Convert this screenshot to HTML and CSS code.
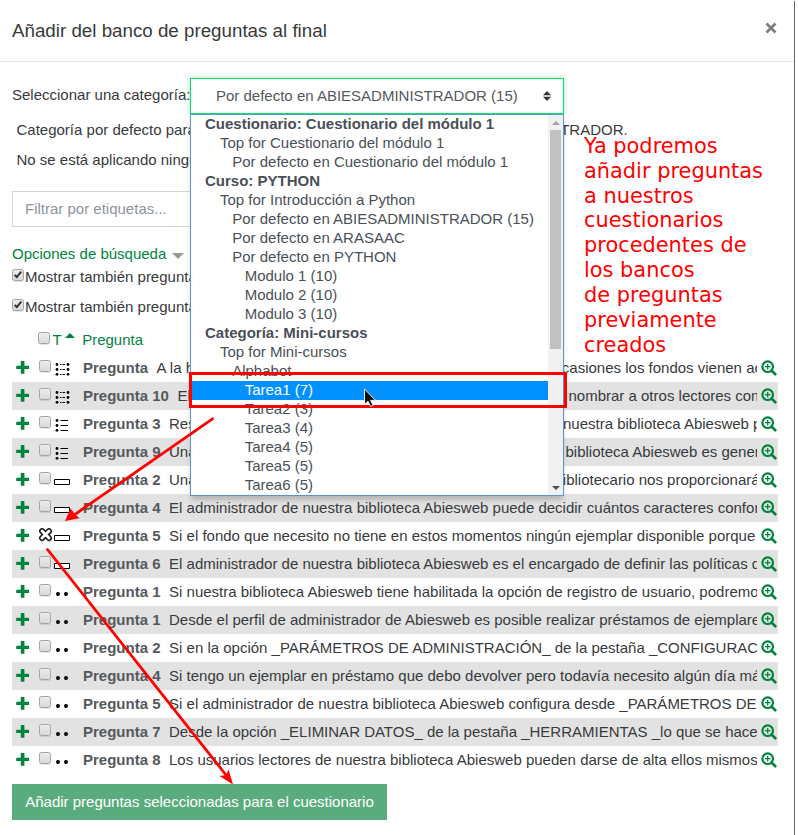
FILE: index.html
```html
<!DOCTYPE html>
<html lang="es">
<head>
<meta charset="utf-8">
<title>Añadir del banco de preguntas al final</title>
<link rel="stylesheet" href="styles.css">
</head>
<body>
<svg class="defs" width="0" height="0">
  <symbol id="plus" viewBox="0 0 13 13"><path d="M4.800 0h3.600v4.700H13v3.400H8.400v4.700H4.800V8.100H0.200V4.700h4.600z" fill="#00843d"/></symbol>
  <symbol id="zoom" viewBox="0 0 16 16"><circle cx="6.700" cy="6.700" r="5.300" fill="none" stroke="#00843d" stroke-width="2.200"/><path d="M10.600 10.600l3.700 3.700" stroke="#00843d" stroke-width="2.700" stroke-linecap="round"/><path d="M6.700 3.900v5.600M3.900 6.700h5.600" stroke="#00843d" stroke-width="1.300"/></symbol>
  <symbol id="match" viewBox="0 0 16 16"><circle cx="3" cy="3.500" r="1.400"/><circle cx="3" cy="8.500" r="1.400"/><circle cx="3" cy="13.300" r="1.400"/><circle cx="14" cy="3.500" r="1.400"/><circle cx="14" cy="8.500" r="1.400"/><circle cx="14" cy="13.300" r="1.400"/><path d="M6 3h1.500v1H6zM8.500 3h2.500v1H8.500zM6 8h1.500v1H6zM8.500 8h2.500v1H8.500zM6 13h1.500v1H6zM8.500 13h2.500v1H8.500z"/></symbol>
  <symbol id="multi" viewBox="0 0 16 16"><circle cx="3" cy="3.500" r="1.400"/><circle cx="3" cy="8.500" r="1.400"/><circle cx="3" cy="13.300" r="1.400"/><path d="M6.500 3h7.500v1H6.500zM6.500 8h7.500v1H6.500zM6.500 13h7.500v1H6.500z"/></symbol>
  <symbol id="short" viewBox="0 0 16 16"><path d="M.5 6.500h15v5H.5z" fill="#fff" stroke="#000"/></symbol>
  <symbol id="tf" viewBox="0 0 16 16"><circle cx="4" cy="9" r="2"/><circle cx="12" cy="9" r="2"/></symbol>
</svg>
<div class="modal">
  <header class="head">
    <h1>Añadir del banco de preguntas al final</h1>
    <svg class="close" width="12" height="12" viewBox="0 0 12 12"><path d="M1.500 1.500l9 9M10.500 1.500l-9 9" stroke="#7f7f7f" stroke-width="2.800"/></svg>
  </header>
  <main>
    <div class="category">
      <label>Seleccionar una categoría:</label>
      <div class="select">
        <span>Por defecto en ABIESADMINISTRADOR (15)</span>
        <svg width="8" height="10" viewBox="0 0 8 10"><path d="M4 0l4 4.300H0zM4 10l4-4.300H0z" fill="#333"/></svg>
        <div class="popup">
          <ul>
            <li class="group">Cuestionario: Cuestionario del módulo 1</li>
            <li class="l1">Top for Cuestionario del módulo 1</li>
            <li class="l2">Por defecto en Cuestionario del módulo 1</li>
            <li class="group">Curso: PYTHON</li>
            <li class="l1">Top for Introducción a Python</li>
            <li class="l2">Por defecto en ABIESADMINISTRADOR (15)</li>
            <li class="l2">Por defecto en ARASAAC</li>
            <li class="l2">Por defecto en PYTHON</li>
            <li class="l3">Modulo 1 (10)</li>
            <li class="l3">Modulo 2 (10)</li>
            <li class="l3">Modulo 3 (10)</li>
            <li class="group">Categoría: Mini-cursos</li>
            <li class="l1">Top for Mini-cursos</li>
            <li class="l2">Alphabot</li>
            <li class="l3 active">Tarea1 (7)</li>
            <li class="l3">Tarea2 (3)</li>
            <li class="l3">Tarea3 (4)</li>
            <li class="l3">Tarea4 (5)</li>
            <li class="l3">Tarea5 (5)</li>
            <li class="l3">Tarea6 (5)</li>
          </ul>
          <div class="scroll">
            <svg width="8" height="4" viewBox="0 0 8 4"><path d="M4 0l4 4H0z" fill="#a3a3a3"/></svg>
            <i></i>
            <svg width="8" height="4" viewBox="0 0 8 4"><path d="M4 4l4-4H0z" fill="#505050"/></svg>
          </div>
        </div>
      </div>
    </div>
    <p class="info">Categoría por defecto para preguntas compartidas en el contexto ABIESADMINISTRADOR.</p>
    <p class="info">No se está aplicando ningún filtro</p>
    <div class="tags">Filtrar por etiquetas...</div>
    <div class="options">Opciones de búsqueda <svg width="12" height="6" viewBox="0 0 12 6"><path d="M0 0h12L6 6z" fill="#999"/></svg></div>
    <label class="opt"><i class="cb on"></i><span>Mostrar también preguntas</span></label>
    <label class="opt second"><i class="cb on"></i><span>Mostrar también preguntas</span></label>
    <div class="thead"><i class="cb"></i><span class="t">T</span><svg width="10" height="5" viewBox="0 0 10 5"><path d="M5 0l5 5H0z" fill="#00843d"/></svg><span class="q">Pregunta</span></div>
    <div class="rows">
      <div class="row"><svg class="plus"><use href="#plus"/></svg><i class="cb"></i><svg class="type"><use href="#match"/></svg><div class="text"><span class="lead w1"><b>Pregunta</b>A la hora</span>ocasiones los fondos vienen acompañados</div><svg class="zoom"><use href="#zoom"/></svg></div>
      <div class="row"><svg class="plus"><use href="#plus"/></svg><i class="cb"></i><svg class="type"><use href="#match"/></svg><div class="text"><span class="lead w2"><b>Pregunta 10</b>El</span>nombrar a otros lectores como</div><svg class="zoom"><use href="#zoom"/></svg></div>
      <div class="row"><svg class="plus"><use href="#plus"/></svg><i class="cb"></i><svg class="type"><use href="#multi"/></svg><div class="text"><span class="lead w3"><b>Pregunta 3</b>Respecto</span>nuestra biblioteca Abiesweb puede</div><svg class="zoom"><use href="#zoom"/></svg></div>
      <div class="row"><svg class="plus"><use href="#plus"/></svg><i class="cb"></i><svg class="type"><use href="#multi"/></svg><div class="text"><span class="lead w4"><b>Pregunta 9</b>Una</span>biblioteca Abiesweb es generar</div><svg class="zoom"><use href="#zoom"/></svg></div>
      <div class="row"><svg class="plus"><use href="#plus"/></svg><i class="cb"></i><svg class="type"><use href="#short"/></svg><div class="text"><span class="lead w5"><b>Pregunta 2</b>Una</span>bibliotecario nos proporcionará</div><svg class="zoom"><use href="#zoom"/></svg></div>
      <div class="row"><svg class="plus"><use href="#plus"/></svg><i class="cb"></i><svg class="type"><use href="#short"/></svg><div class="text"><b>Pregunta 4</b>El administrador de nuestra biblioteca Abiesweb puede decidir cuántos caracteres conforman</div><svg class="zoom"><use href="#zoom"/></svg></div>
      <div class="row"><svg class="plus"><use href="#plus"/></svg><i class="cb hidden"></i><svg class="type"><use href="#short"/></svg><div class="text"><b>Pregunta 5</b>Si el fondo que necesito no tiene en estos momentos ningún ejemplar disponible porque</div><svg class="zoom"><use href="#zoom"/></svg></div>
      <div class="row"><svg class="plus"><use href="#plus"/></svg><i class="cb"></i><svg class="type"><use href="#short"/></svg><div class="text"><b>Pregunta 6</b>El administrador de nuestra biblioteca Abiesweb es el encargado de definir las políticas de</div><svg class="zoom"><use href="#zoom"/></svg></div>
      <div class="row"><svg class="plus"><use href="#plus"/></svg><i class="cb"></i><svg class="type"><use href="#tf"/></svg><div class="text"><b>Pregunta 1</b>Si nuestra biblioteca Abiesweb tiene habilitada la opción de registro de usuario, podremos</div><svg class="zoom"><use href="#zoom"/></svg></div>
      <div class="row"><svg class="plus"><use href="#plus"/></svg><i class="cb"></i><svg class="type"><use href="#tf"/></svg><div class="text"><b>Pregunta 1</b>Desde el perfil de administrador de Abiesweb es posible realizar préstamos de ejemplares</div><svg class="zoom"><use href="#zoom"/></svg></div>
      <div class="row"><svg class="plus"><use href="#plus"/></svg><i class="cb"></i><svg class="type"><use href="#tf"/></svg><div class="text"><b>Pregunta 2</b>Si en la opción _PARÁMETROS DE ADMINISTRACIÓN_ de la pestaña _CONFIGURACIÓN_</div><svg class="zoom"><use href="#zoom"/></svg></div>
      <div class="row"><svg class="plus"><use href="#plus"/></svg><i class="cb"></i><svg class="type"><use href="#tf"/></svg><div class="text"><b>Pregunta 4</b>Si tengo un ejemplar en préstamo que debo devolver pero todavía necesito algún día más</div><svg class="zoom"><use href="#zoom"/></svg></div>
      <div class="row"><svg class="plus"><use href="#plus"/></svg><i class="cb"></i><svg class="type"><use href="#tf"/></svg><div class="text"><b>Pregunta 5</b>Si el administrador de nuestra biblioteca Abiesweb configura desde _PARÁMETROS DE</div><svg class="zoom"><use href="#zoom"/></svg></div>
      <div class="row"><svg class="plus"><use href="#plus"/></svg><i class="cb"></i><svg class="type"><use href="#tf"/></svg><div class="text"><b>Pregunta 7</b>Desde la opción _ELIMINAR DATOS_ de la pestaña _HERRAMIENTAS _lo que se hace</div><svg class="zoom"><use href="#zoom"/></svg></div>
      <div class="row"><svg class="plus"><use href="#plus"/></svg><i class="cb"></i><svg class="type"><use href="#tf"/></svg><div class="text"><b>Pregunta 8</b>Los usuarios lectores de nuestra biblioteca Abiesweb pueden darse de alta ellos mismos</div><svg class="zoom"><use href="#zoom"/></svg></div>
    </div>
    <button class="add">Añadir preguntas seleccionadas para el cuestionario</button>
  </main>
</div>
<div class="note">Ya podremos<br>añadir preguntas<br>a nuestros<br>cuestionarios<br>procedentes de<br>los bancos<br>de preguntas<br>previamente<br>creados</div>
<svg class="marks" width="798" height="835" viewBox="0 0 798 835">
  <g stroke="#f00" stroke-width="3" fill="none">
    <rect x="190.500" y="373.500" width="375" height="33"/>
    <path stroke-width="2.800" stroke-linecap="round" d="M212.500 418.800L75 514.300M47.500 549.500L226 775"/>
  </g>
  <path fill="#f00" d="M65 521l5.500-12.500 4.500 5.800 4.500 4zM233 784.500l-13.500-8.500 6.500-1 2.500-5.500z"/>
  <g fill="none" stroke-linecap="round">
    <path d="M42.500 532l7 7M49.500 532l-7 7" stroke="#888" stroke-width="5.600" opacity=".5"/>
    <path d="M42 531l7 7M49 531l-7 7" stroke="#111" stroke-width="5.800"/>
    <path d="M42 531l7 7M49 531l-7 7" stroke="#fff" stroke-width="3"/>
  </g>
  <path d="M364.500 389v15.500l3.500-3.200 2.600 5.200 2.600-1.200-2.600-4.900h5z" fill="#111" stroke="#fff" stroke-width=".9"/>
</svg>
</body>
</html>
```
FILE: styles.css
```css
* { box-sizing: border-box; }
body {
  margin: 0;
  height: 835px;
  overflow: hidden;
  position: relative;
  background: #fff;
  color: #373a3c;
  font: 15px/22px "Liberation Sans", Arial, sans-serif;
}
.defs { position: absolute; }
.modal { width: 795px; height: 834px; margin-top: 1px; border-right: 1px solid #65686b; }
.head {
  height: 61px;
  padding: 0 17px 0 12px;
  display: flex;
  align-items: center;
  justify-content: space-between;
  border-bottom: 1px solid #e5e5e5;
}
h1 { margin: 0; font-size: 18.75px; font-weight: 400; }
.close { margin-bottom: 6px; }
main { padding: 16px 16px 0 12px; }
.category { display: flex; height: 36px; align-items: center; white-space: nowrap; }
.category label { width: 178px; padding-bottom: 2px; }
.select {
  position: relative;
  width: 374px;
  height: 36px;
  padding: 0 12px 0 25px;
  border: 1px solid #00e56d;
  box-shadow: 0 0 5px rgba(0, 132, 61, .3);
  background: #fff;
  color: #55595c;
  display: flex;
  align-items: center;
  justify-content: space-between;
}
.popup {
  position: absolute;
  z-index: 2;
  left: -1px;
  top: 35px;
  width: 374px;
  height: 382px;
  display: flex;
  border: 1px solid #5d94cf;
  background: #fff;
  box-shadow: 0 5px 5px -1px rgba(0, 0, 0, .2);
  color: #495057;
}
ul { list-style: none; margin: 0; padding: 0; flex: 1; }
li { height: 19px; line-height: 17px; }
.group { padding-left: 14px; font-weight: 700; }
.l1 { padding-left: 29px; }
.l2 { padding-left: 41.200px; }
.l3 { padding-left: 53.700px; }
.active { background: #0090ff; color: #fff; }
.scroll {
  width: 15px;
  padding: 6px 0 5px;
  background: #f1f1f1;
  display: flex;
  flex-direction: column;
  align-items: center;
}
.scroll i { width: 11px; height: 219px; margin: 5px 0 auto; background: #c1c1c1; }
.info { margin: 5px 0 8px; padding-left: 4.500px; white-space: nowrap; }
.info + .info { margin: 8px 0 20px; }
.tags { width: 300px; height: 36px; padding: 6px 12px; border: 1px solid #cfd5da; color: #8d959c; }
.options { margin-top: 16px; color: #00843d; }
.options svg { margin-left: 2px; }
.opt { display: flex; height: 22px; }
.opt.second { margin-top: 8px; }
.opt span { margin-top: 1px; }
.opt .cb { margin: 4px 1px 0 0; }
.cb {
  display: block;
  flex: none;
  position: relative;
  width: 12px;
  height: 12px;
  border: 1px solid #a4a4a4;
  border-radius: 2.500px;
  background: linear-gradient(#ececec, #dadada);
  box-shadow: 0 1px 0 rgba(0, 0, 0, .1);
}
.hidden { visibility: hidden; }
.on::after {
  content: "";
  position: absolute;
  left: 3px;
  top: 0;
  width: 4px;
  height: 8px;
  box-sizing: border-box;
  border: solid #333;
  border-width: 0 2px 2px 0;
  transform: rotate(40deg);
}
.thead { display: flex; height: 26px; margin-top: 11px; padding-left: 26px; color: #00843d; }
.thead .cb { margin-top: 4px; }
.thead .t { margin: 1px 3px 0 2.500px; }
.thead svg { margin-top: 5px; }
.thead .q { margin: 1px 0 0 7.500px; }
.row { display: flex; height: 28px; }
.row:nth-child(even) { background: #e2e2e2; }
.row > svg { flex: none; }
.plus { width: 13px; height: 13px; margin: 6.500px 10px 0 4px; }
.row .cb { margin: 6px 3px 0 0; }
.type { width: 16px; height: 16px; margin: 7px 13px 0 -1px; }
.row .type { margin-left: 0; }
.text { width: 674px; height: 28px; line-height: 28px; overflow: hidden; white-space: nowrap; }
.text b { margin-right: 8.500px; color: #55595c; }
.lead { display: inline-block; }
.w1 { width: 470.500px; }
.w2 { width: 485.500px; }
.w3 { width: 480px; }
.w4 { width: 482.500px; }
.w5 { width: 471.500px; }
.zoom { width: 16px; height: 16px; margin: 6px 0 0 4px; }
.add {
  display: block;
  width: 375px;
  height: 36px;
  margin-top: 10px;
  padding: 0;
  border: 0;
  background: #5aac7e;
  color: #fff;
  font: inherit;
}
.note {
  position: absolute;
  left: 584px;
  top: 134px;
  z-index: 3;
  color: #f00;
  font: 20.900px/24.830px "DejaVu Sans", sans-serif;
  white-space: nowrap;
}
.marks { position: absolute; left: 0; top: 0; z-index: 4; }
```
